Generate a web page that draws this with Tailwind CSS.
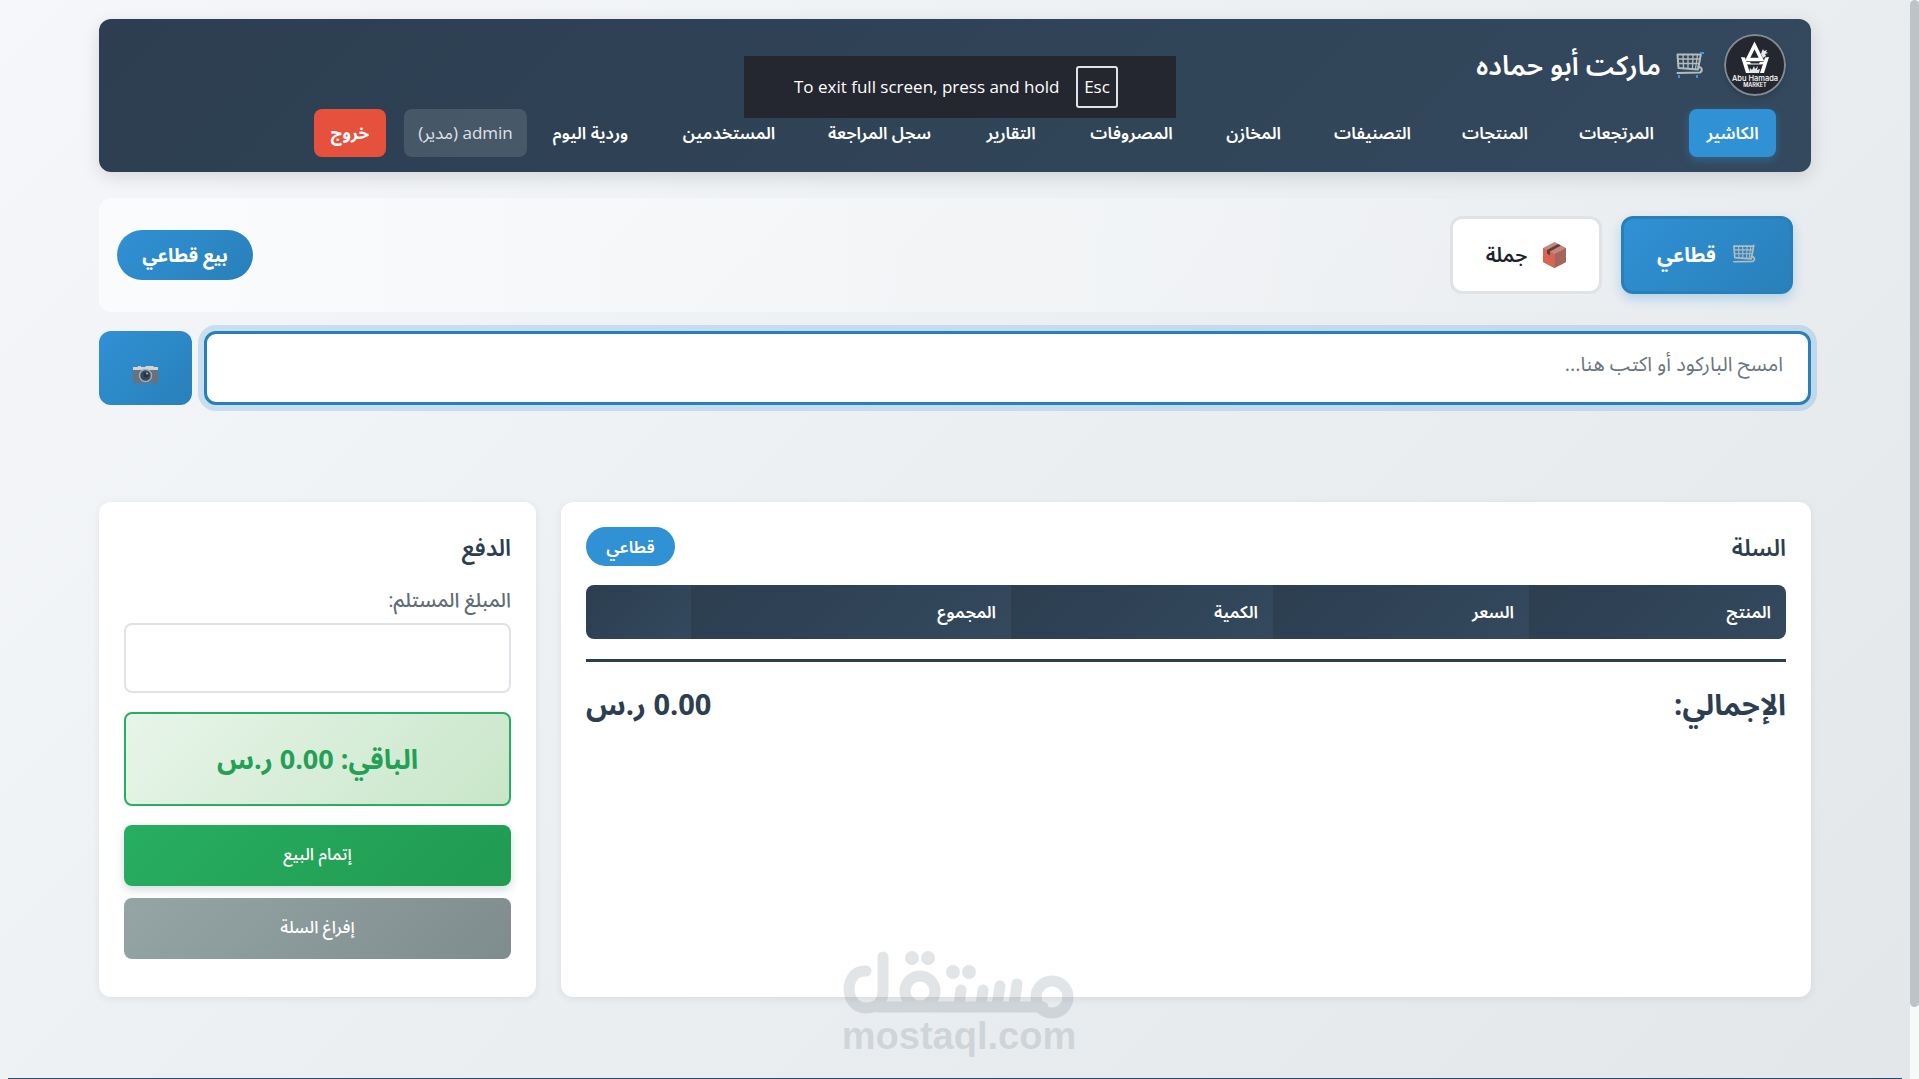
<!DOCTYPE html>
<html lang="ar" dir="rtl">
<head>
    <meta charset="UTF-8">
    <meta name="viewport" content="width=device-width, initial-scale=1.0">
    <title>ماركت أبو حماده - الكاشير</title>
    <script src="https://cdn.jsdelivr.net/npm/@tailwindcss/browser@4"></script>
</head>
<body class="relative min-h-screen overflow-hidden bg-linear-135 from-[#f5f7fa] to-[#e3e7ea] pr-[9px] font-['Open_Sans','Noto_Sans_Arabic','DejaVu_Sans',sans-serif] text-[#2c3e50]">

    <!-- Shared icons -->
    <svg class="hidden">
        <symbol id="cart" viewBox="0 0 28 26">
            <g fill="none" stroke="#b4bcbd" stroke-linecap="round" stroke-linejoin="round">
                <path stroke-width="2" d="M25 1.500 22 17.500 2.500 16 1.500 2.500H24M22 15c4-.5 5 4 2 5.500L1.500 21"/>
                <path stroke-width="1.300" d="M2 7h21M2 11.500h20M7 3l.5 13M12 3v13.500M17 3l-.5 13.500M21.500 3l-2 13.500"/>
            </g>
        </symbol>
    </svg>

    <div class="mx-auto w-full max-w-[1712px] pt-[19px]">
        <!-- Header -->
        <header class="flex flex-col gap-[13px] rounded-xl bg-linear-135 from-[#2c3e50] to-[#34495e] px-[25px] py-[15px] text-white shadow-[0_5px_18px_rgba(0,0,0,0.12)]">
            <div class="flex items-center gap-5">
                <svg class="size-[62px] rounded-full shadow-md" viewBox="0 0 62 62" role="img" aria-label="Abu Hamada Market">
                    <circle cx="31" cy="31" r="30" fill="#24272f" stroke="#828a94" stroke-width="2"/>
                    <path fill="none" stroke="#fff" stroke-width="3.500" d="M30.500 11.500 23.500 25.500h14Z"/>
                    <path fill="#fff" d="m17 23 4 .5 5 15.500h-4Zm28 0-4 .5-5 15.500h4Z"/>
                    <path fill="#fff" d="M21 28h5l1 1.500h8l1-1.500h5v1.500l-4 1H24l-3-1Z"/>
                    <path fill="#e5e7e9" d="m25 39 1-5 2 2 2-4 1 3 3-3-1 4 3-1-1 4Zm12-19 1-3 1-2 1 2 3-1-1 2 2 1-3 1 1 2-3 2Z"/>
                    <text x="31" y="47" fill="#fff" font-size="7.500" font-family="Inter" font-weight="500" text-anchor="middle" direction="ltr">Abu Hamada</text>
                    <text x="31" y="53" fill="#fff" font-size="5.500" font-family="Inter" font-weight="600" text-anchor="middle" direction="ltr">MARKET</text>
                </svg>
                <h1 class="flex items-center gap-[15px] text-[27px] leading-10 font-semibold">
                    <svg class="h-[26px] w-7" viewBox="0 0 28 26" aria-hidden="true">
                        <use href="#cart"/>
                        <path stroke="#3498db" stroke-width="2" d="M24 1h4M3 23v3M21 23v3"/>
                    </svg>
                    ماركت أبو حماده
                </h1>
            </div>
            <div class="flex h-12 items-center gap-[6px] pr-[10px]">
                <nav class="flex h-12 gap-[18px] text-[17px] font-semibold [&>a]:flex [&>a]:items-center [&>a]:justify-center [&>a]:whitespace-nowrap">
                    <a href="#" class="w-[87px] rounded-lg bg-[#3091d5] shadow-[0_3px_10px_rgba(48,145,213,0.4)]">الكاشير</a>
                    <a href="#" class="w-[109px]">المرتجعات</a>
                    <a href="#" class="w-[98px]">المنتجات</a>
                    <a href="#" class="w-[111px]">التصنيفات</a>
                    <a href="#" class="w-[91px]">المخازن</a>
                    <a href="#" class="w-[117px]">المصروفات</a>
                    <a href="#" class="w-[88px]">التقارير</a>
                    <a href="#" class="w-[139px]">سجل المراجعة</a>
                    <a href="#" class="w-[126px]">المستخدمين</a>
                    <a href="#" class="w-[115px]">وردية اليوم</a>
                </nav>
                <div class="flex items-center gap-[18px]">
                    <span class="flex h-12 w-[123px] items-center justify-center rounded-lg bg-white/12 text-[17px] whitespace-nowrap text-[#dfe3e6]">admin (مدير)</span>
                    <a href="#" class="flex h-12 w-[72px] items-center justify-center rounded-lg bg-[#e6513e] text-[17px] font-bold">خروج</a>
                </div>
            </div>
        </header>

        <!-- Sale mode -->
        <section class="mt-[26px] flex items-center justify-between rounded-xl bg-linear-to-r from-white/60 to-transparent p-[18px]">
            <div class="flex gap-[19px]">
                <button type="button" class="flex h-[78px] w-[172px] items-center justify-center gap-4 rounded-xl border-3 border-[#2980b9] bg-linear-135 from-[#3091d5] to-[#2980b9] text-[20px] font-bold text-white shadow-[0_5px_12px_rgba(48,145,213,0.3)]">
                    <svg class="h-[22px] w-[25px]" viewBox="0 0 28 26" aria-hidden="true"><use href="#cart"/></svg>
                    قطاعي
                </button>
                <button type="button" class="flex h-[78px] w-[152px] items-center justify-center gap-4 rounded-xl border-3 border-[#dfe3e7] bg-white text-[20px] font-semibold text-[#1d232b]">
                    <svg class="h-[26px] w-[23px]" viewBox="0 0 23 26" aria-hidden="true">
                        <path fill="#c5887f" d="M11.500 0 23 6v14l-11.500 6L0 20V6Z"/>
                        <path fill="#d9644f" d="m0 6 11.500 6v14L0 20Z"/>
                        <path fill="#a5645c" d="m23 6-11.500 6v14L23 20Z"/>
                        <path fill="#5f3f3f" d="m4 8 11-6 3 1.500L7 9.500v4l-3-2Z"/>
                    </svg>
                    جملة
                </button>
            </div>
            <span class="flex h-[50px] w-[136px] items-center justify-center rounded-full bg-linear-135 from-[#3091d5] to-[#2980b9] text-[19px] font-bold text-white">بيع قطاعي</span>
        </section>

        <!-- Barcode search -->
        <div class="mt-[19px] flex h-[74px] gap-3">
            <input type="text" aria-label="الباركود" placeholder="امسح الباركود أو اكتب هنا..." class="min-w-0 flex-1 rounded-xl border-3 border-[#2980b9] bg-white px-[25px] pb-2 text-[20px] ring-6 ring-[#3498db]/22 outline-none placeholder:text-[#6c757d]">
            <button type="button" aria-label="الكاميرا" class="flex w-[93px] items-center justify-center rounded-xl bg-linear-135 from-[#3091d5] to-[#2980b9] pt-3">
                <svg class="h-[17px] w-[25px]" viewBox="0 0 25 17" aria-hidden="true">
                    <path fill="#69717b" d="M0 2h25v15H0Z"/>
                    <path fill="#cfd4d6" d="M0 1h5V0h3v1h4l1-1h7l1 1h4v3H0Z"/>
                    <circle cx="12.500" cy="9.500" r="6" fill="#34495e" stroke="#a5afb3" stroke-width="1.500"/>
                    <circle cx="13" cy="9" r="2.500" fill="#263442"/>
                    <circle cx="14" cy="7.500" r="1" fill="#b4bcbd"/>
                </svg>
            </button>
        </div>

        <main class="mt-[97px] flex gap-[25px]">
            <!-- Cart -->
            <section class="min-h-[495px] flex-1 rounded-xl bg-white p-[25px] shadow-[0_2px_8px_rgba(0,0,0,0.07)]">
                <div class="flex h-[39px] items-center justify-between">
                    <h2 class="text-[23px] leading-9 font-semibold">السلة</h2>
                    <span class="flex h-[39px] w-[89px] items-center justify-center rounded-full bg-[#3091d5] text-[17px] font-semibold text-white">قطاعي</span>
                </div>
                <div class="mt-[19px] overflow-hidden rounded-lg">
                    <table class="w-full table-fixed text-right text-[17px] text-white">
                        <thead>
                            <tr class="h-[54px] [&>th]:bg-linear-135 [&>th]:from-[#2c3e50] [&>th]:to-[#34495e] [&>th]:px-[15px] [&>th]:font-semibold">
                                <th class="w-[257px]">المنتج</th>
                                <th class="w-[256px]">السعر</th>
                                <th class="w-[262px]">الكمية</th>
                                <th class="w-[320px]">المجموع</th>
                                <th></th>
                            </tr>
                        </thead>
                    </table>
                </div>
                <div class="mt-5 flex justify-between border-t-3 border-[#2c3e50] pt-5 text-[29px] leading-[44px] font-bold">
                    <span>الإجمالي:</span>
                    <span>0.00 ر.س</span>
                </div>
            </section>

            <!-- Payment -->
            <section class="w-[437px] rounded-xl bg-white p-[25px] shadow-[0_2px_8px_rgba(0,0,0,0.07)]">
                <h2 class="text-[23px] leading-10 font-semibold">الدفع</h2>
                <label for="received" class="mt-[17px] block text-[20px] leading-8 font-medium text-[#5f6b76]">المبلغ المستلم:</label>
                <input id="received" type="text" class="mt-[7px] block h-[70px] w-full rounded-lg border-2 border-[#dfe3e8] px-4 text-[20px]">
                <div class="mt-[19px] flex h-[94px] items-center justify-center rounded-lg border-2 border-[#27ae60] bg-linear-135 from-[#e8f5e9] to-[#c8e6c9] text-[27px] font-bold text-[#23a055]">الباقي: 0.00 ر.س</div>
                <button type="button" class="mt-[19px] block h-[61px] w-full rounded-lg bg-linear-135 from-[#27ae60] to-[#219a52] pb-1 text-[17px] font-medium text-white shadow-[0_4px_10px_rgba(39,80,96,0.2)]">إتمام البيع</button>
                <button type="button" class="mt-3 block h-[61px] w-full rounded-lg bg-linear-135 from-[#95a5a6] to-[#7f8c8d] pb-1 text-[17px] font-medium text-white">إفراغ السلة</button>
            </section>
        </main>
    </div>

    <!-- Full screen hint -->
    <div dir="ltr" class="absolute top-14 left-[744px] flex h-[62px] w-[432px] items-center justify-between bg-[#24272f] pr-[58px] pl-[50px] text-[17px] whitespace-nowrap text-white">
        To exit full screen, press and hold
        <kbd class="flex h-[42px] w-[42px] items-center justify-center rounded-[3px] border-2 border-[#dfe3e6] font-['Open_Sans',sans-serif]">Esc</kbd>
    </div>

    <!-- Watermark -->
    <svg class="absolute top-[950px] left-[843px] h-[112px] w-[232px] opacity-13" viewBox="0 0 232 112" role="img" aria-label="مستقل mostaql.com">
        <g fill="none" stroke="#2c3e50" stroke-width="11" stroke-linecap="round">
            <path d="M23 21c-22-2-23 37 0 37 12 0 17-8 17-16V7"/>
            <path d="M36 57h164"/>
            <circle cx="77" cy="41" r="15"/>
            <circle cx="209" cy="47" r="16"/>
            <path d="m118 40-2 15M140 40l-2 15M157 36l-3 19M174 34l-3 21"/>
        </g>
        <g fill="#2c3e50">
            <circle cx="69" cy="8" r="7"/><circle cx="85" cy="8" r="7"/>
            <circle cx="110" cy="22" r="7"/><circle cx="126" cy="22" r="7"/>
            <text x="116" y="99" font-size="38" font-weight="700" font-family="Liberation Sans" text-anchor="middle" direction="ltr">mostaql.com</text>
        </g>
    </svg>

    <!-- Top edge of the next panel -->
    <div class="absolute right-[17px] bottom-0 left-2 h-px bg-[#2c4a66]"></div>

    <!-- Scrollbar -->
    <div class="absolute inset-y-0 right-0 w-[9px] bg-[#f8fafa]">
        <div class="h-[1007px] rounded-full bg-[#bdc3c7]"></div>
    </div>
</body>
</html>
